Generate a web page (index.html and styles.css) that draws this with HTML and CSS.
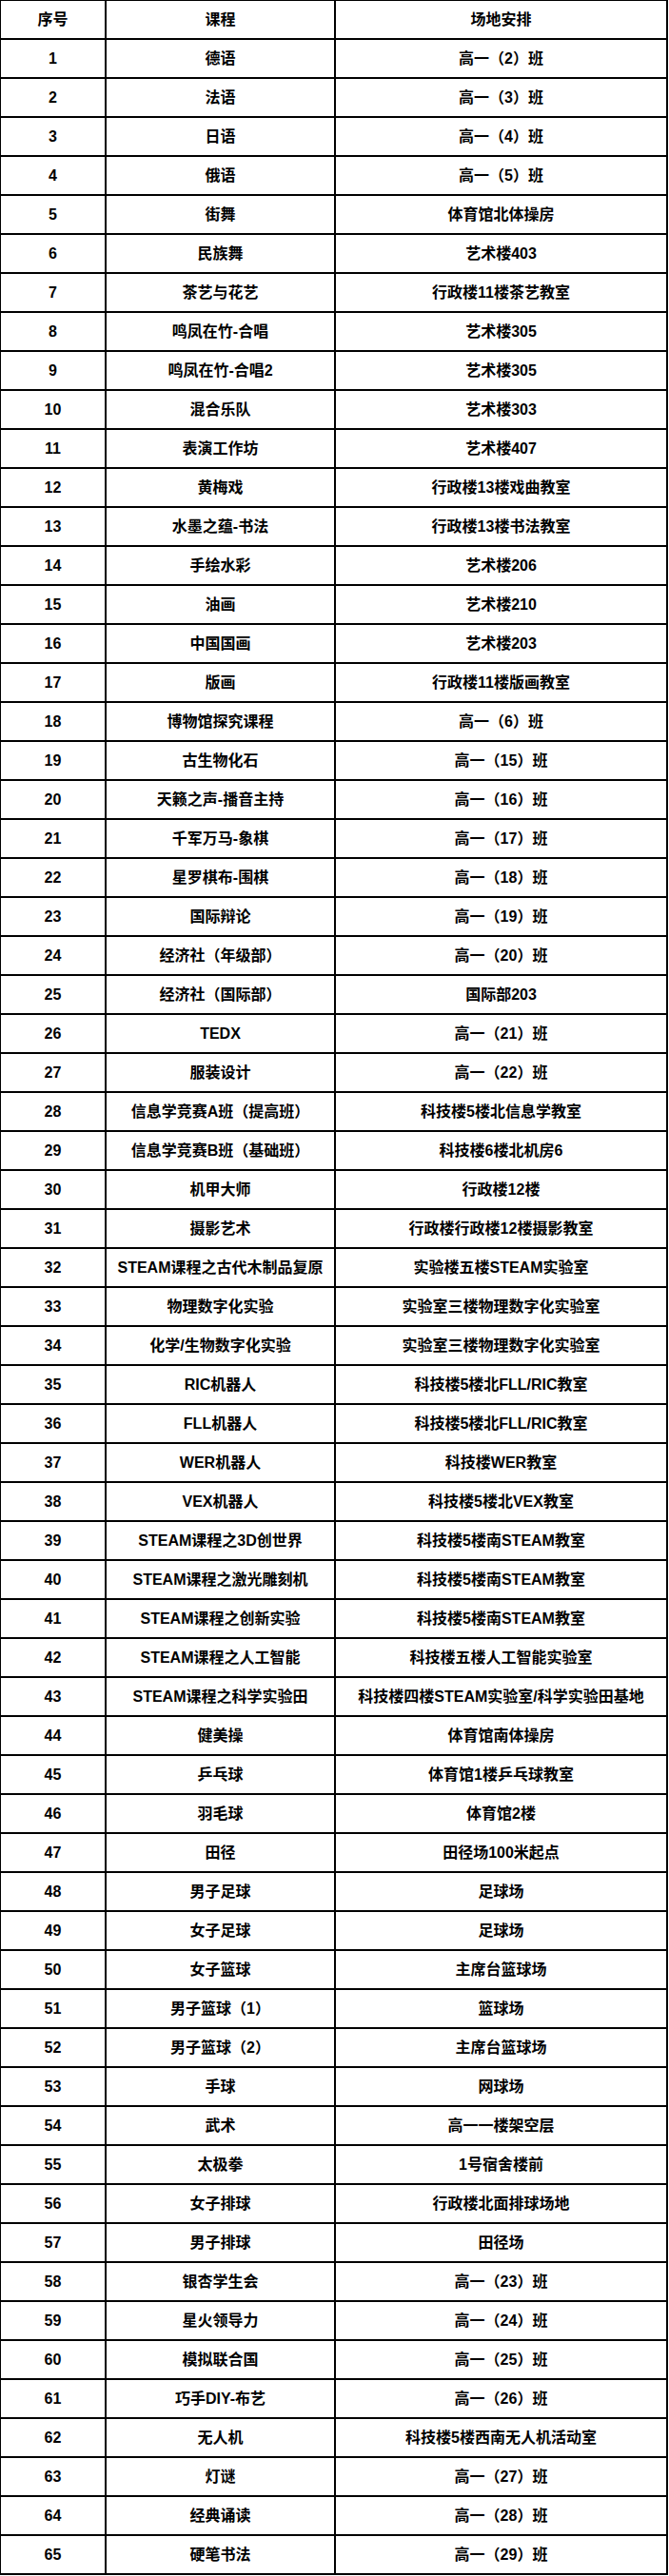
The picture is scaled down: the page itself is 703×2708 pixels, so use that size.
FILE: index.html
```html
<!DOCTYPE html>
<html lang="zh-CN">
<head>
<meta charset="utf-8">
<title>课程场地安排</title>
<link rel="stylesheet" href="styles.css">
</head>
<body>
<table class="schedule">
  <colgroup>
    <col class="c-no">
    <col class="c-course">
    <col class="c-place">
  </colgroup>
  <thead>
    <tr><th>序号</th><th>课程</th><th>场地安排</th></tr>
  </thead>
  <tbody>
    <tr><td>1</td><td>德语</td><td>高一（2）班</td></tr>
    <tr><td>2</td><td>法语</td><td>高一（3）班</td></tr>
    <tr><td>3</td><td>日语</td><td>高一（4）班</td></tr>
    <tr><td>4</td><td>俄语</td><td>高一（5）班</td></tr>
    <tr><td>5</td><td>街舞</td><td>体育馆北体操房</td></tr>
    <tr><td>6</td><td>民族舞</td><td>艺术楼403</td></tr>
    <tr><td>7</td><td>茶艺与花艺</td><td>行政楼11楼茶艺教室</td></tr>
    <tr><td>8</td><td>鸣凤在竹-合唱</td><td>艺术楼305</td></tr>
    <tr><td>9</td><td>鸣凤在竹-合唱2</td><td>艺术楼305</td></tr>
    <tr><td>10</td><td>混合乐队</td><td>艺术楼303</td></tr>
    <tr><td>11</td><td>表演工作坊</td><td>艺术楼407</td></tr>
    <tr><td>12</td><td>黄梅戏</td><td>行政楼13楼戏曲教室</td></tr>
    <tr><td>13</td><td>水墨之蕴-书法</td><td>行政楼13楼书法教室</td></tr>
    <tr><td>14</td><td>手绘水彩</td><td>艺术楼206</td></tr>
    <tr><td>15</td><td>油画</td><td>艺术楼210</td></tr>
    <tr><td>16</td><td>中国国画</td><td>艺术楼203</td></tr>
    <tr><td>17</td><td>版画</td><td>行政楼11楼版画教室</td></tr>
    <tr><td>18</td><td>博物馆探究课程</td><td>高一（6）班</td></tr>
    <tr><td>19</td><td>古生物化石</td><td>高一（15）班</td></tr>
    <tr><td>20</td><td>天籁之声-播音主持</td><td>高一（16）班</td></tr>
    <tr><td>21</td><td>千军万马-象棋</td><td>高一（17）班</td></tr>
    <tr><td>22</td><td>星罗棋布-围棋</td><td>高一（18）班</td></tr>
    <tr><td>23</td><td>国际辩论</td><td>高一（19）班</td></tr>
    <tr><td>24</td><td>经济社（年级部）</td><td>高一（20）班</td></tr>
    <tr><td>25</td><td>经济社（国际部）</td><td>国际部203</td></tr>
    <tr><td>26</td><td>TEDX</td><td>高一（21）班</td></tr>
    <tr><td>27</td><td>服装设计</td><td>高一（22）班</td></tr>
    <tr><td>28</td><td>信息学竞赛A班（提高班）</td><td>科技楼5楼北信息学教室</td></tr>
    <tr><td>29</td><td>信息学竞赛B班（基础班）</td><td>科技楼6楼北机房6</td></tr>
    <tr><td>30</td><td>机甲大师</td><td>行政楼12楼</td></tr>
    <tr><td>31</td><td>摄影艺术</td><td>行政楼行政楼12楼摄影教室</td></tr>
    <tr><td>32</td><td>STEAM课程之古代木制品复原</td><td>实验楼五楼STEAM实验室</td></tr>
    <tr><td>33</td><td>物理数字化实验</td><td>实验室三楼物理数字化实验室</td></tr>
    <tr><td>34</td><td>化学/生物数字化实验</td><td>实验室三楼物理数字化实验室</td></tr>
    <tr><td>35</td><td>RIC机器人</td><td>科技楼5楼北FLL/RIC教室</td></tr>
    <tr><td>36</td><td>FLL机器人</td><td>科技楼5楼北FLL/RIC教室</td></tr>
    <tr><td>37</td><td>WER机器人</td><td>科技楼WER教室</td></tr>
    <tr><td>38</td><td>VEX机器人</td><td>科技楼5楼北VEX教室</td></tr>
    <tr><td>39</td><td>STEAM课程之3D创世界</td><td>科技楼5楼南STEAM教室</td></tr>
    <tr><td>40</td><td>STEAM课程之激光雕刻机</td><td>科技楼5楼南STEAM教室</td></tr>
    <tr><td>41</td><td>STEAM课程之创新实验</td><td>科技楼5楼南STEAM教室</td></tr>
    <tr><td>42</td><td>STEAM课程之人工智能</td><td>科技楼五楼人工智能实验室</td></tr>
    <tr><td>43</td><td>STEAM课程之科学实验田</td><td>科技楼四楼STEAM实验室/科学实验田基地</td></tr>
    <tr><td>44</td><td>健美操</td><td>体育馆南体操房</td></tr>
    <tr><td>45</td><td>乒乓球</td><td>体育馆1楼乒乓球教室</td></tr>
    <tr><td>46</td><td>羽毛球</td><td>体育馆2楼</td></tr>
    <tr><td>47</td><td>田径</td><td>田径场100米起点</td></tr>
    <tr><td>48</td><td>男子足球</td><td>足球场</td></tr>
    <tr><td>49</td><td>女子足球</td><td>足球场</td></tr>
    <tr><td>50</td><td>女子篮球</td><td>主席台篮球场</td></tr>
    <tr><td>51</td><td>男子篮球（1）</td><td>篮球场</td></tr>
    <tr><td>52</td><td>男子篮球（2）</td><td>主席台篮球场</td></tr>
    <tr><td>53</td><td>手球</td><td>网球场</td></tr>
    <tr><td>54</td><td>武术</td><td>高一一楼架空层</td></tr>
    <tr><td>55</td><td>太极拳</td><td>1号宿舍楼前</td></tr>
    <tr><td>56</td><td>女子排球</td><td>行政楼北面排球场地</td></tr>
    <tr><td>57</td><td>男子排球</td><td>田径场</td></tr>
    <tr><td>58</td><td>银杏学生会</td><td>高一（23）班</td></tr>
    <tr><td>59</td><td>星火领导力</td><td>高一（24）班</td></tr>
    <tr><td>60</td><td>模拟联合国</td><td>高一（25）班</td></tr>
    <tr><td>61</td><td>巧手DIY-布艺</td><td>高一（26）班</td></tr>
    <tr><td>62</td><td>无人机</td><td>科技楼5楼西南无人机活动室</td></tr>
    <tr><td>63</td><td>灯谜</td><td>高一（27）班</td></tr>
    <tr><td>64</td><td>经典诵读</td><td>高一（28）班</td></tr>
    <tr><td>65</td><td>硬笔书法</td><td>高一（29）班</td></tr>
  </tbody>
</table>
</body>
</html>
```
FILE: styles.css
```css
html, body {
  margin: 0;
  padding: 0;
  background: #ffffff;
}

.schedule {
  border-collapse: separate;
  border-spacing: 0;
  table-layout: fixed;
  width: 702px;
  border-top: 1px solid #000;
  border-left: 1px solid #000;
  font-family: "Liberation Sans", "Noto Sans CJK SC", sans-serif;
  font-size: 16px;
  font-weight: bold;
  color: #000;
}

.c-no { width: 111px; }
.c-course { width: 241px; }
.c-place { width: 349px; }

.schedule th,
.schedule td {
  height: 39px;
  padding: 0;
  border-right: 2px solid #000;
  border-bottom: 2px solid #000;
  text-align: center;
  vertical-align: middle;
  white-space: nowrap;
  line-height: 20px;
  font-weight: bold;
}
```
